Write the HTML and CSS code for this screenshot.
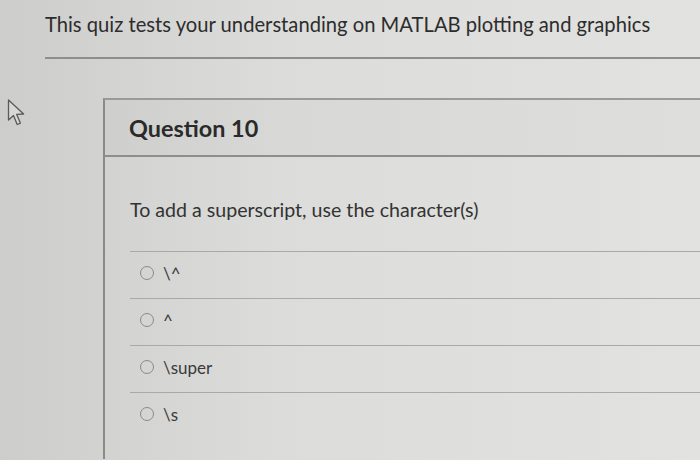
FILE: index.html
```html
<!DOCTYPE html>
<html>
<head>
  <link rel="stylesheet" href="styles.css">
</head>
<body>
  <div class="page">
    <h1 class="quiz-intro">This quiz tests your understanding on MATLAB plotting and graphics</h1>

    <div class="content">
      <div class="cursor">
        <svg width="22" height="30" viewBox="0 0 22 30">
          <path d="M2.5 2 L2.5 22 L7.5 17.5 L11.2 26.5 L14.4 25.1 L10.7 16.4 L17.6 16 Z" fill="#d8d8d6" stroke="#5a5a58" stroke-width="1.3" stroke-linejoin="round"/>
        </svg>
      </div>

      <div class="question">
        <div class="question-header">
          <h2>Question 10</h2>
        </div>
        <div class="question-body">
          <p class="question-text">To add a superscript, use the character(s)</p>
          <div class="answers">
            <label class="answer"><span class="radio"></span>\^</label>
            <label class="answer"><span class="radio"></span>^</label>
            <label class="answer"><span class="radio"></span>\super</label>
            <label class="answer"><span class="radio"></span>\s</label>
          </div>
        </div>
      </div>
    </div>
  </div>
</body>
</html>
```

FILE: styles.css
```css
body {
  font-family: Lato, "Open Sans", sans-serif;
  background: linear-gradient(to right, #cdcdcb, #dcdcda 40%, #e2e2e0);
  color: #2d2d2d;
  margin: 0;
  width: 700px;
  height: 460px;
  overflow: hidden;
}

.page {
  padding: 11px 0 0 45px;
}

.quiz-intro {
  font-size: 20.2px;
  font-weight: 400;
  margin: 0;
  padding-bottom: 20px;
  border-bottom: 2px solid #8e8e8b;
  line-height: 26px;
}

.content {
  display: flex;
  margin-left: -45px;
  padding-top: 39px;
}

.cursor {
  width: 103px;
  padding: 0 0 0 6px;
  box-sizing: border-box;
  flex-shrink: 0;
}

.question {
  flex: 1;
  height: 361px;
  box-sizing: border-box;
  border-top: 2px solid #9a9a97;
  border-left: 2px solid #8a8a87;
}

.question-header {
  background: rgba(0, 0, 0, 0.015);
  border-bottom: 2px solid #8e8e8b;
  height: 55px;
  display: flex;
  align-items: center;
  padding-left: 24px;
}

.question-header h2 {
  margin: 0;
  font-size: 23.4px;
  font-weight: 700;
  color: #2a2a2a;
}

.question-body {
  padding: 40px 0 0 25px;
}

.question-text {
  margin: 0;
  font-size: 19.6px;
  line-height: 26px;
  color: #333;
  padding-bottom: 28px;
  border-bottom: 1px solid #a9a9a6;
}

.answer {
  display: flex;
  align-items: center;
  gap: 9px;
  height: 42px;
  padding: 0 0 4px 10px;
  font-size: 17px;
  color: #3a3a3a;
  border-bottom: 1px solid #a9a9a6;
}

.answer:last-child {
  border-bottom: none;
}

.radio {
  width: 12px;
  height: 12px;
  border: 1.5px solid #8a8a88;
  border-radius: 50%;
}
```
